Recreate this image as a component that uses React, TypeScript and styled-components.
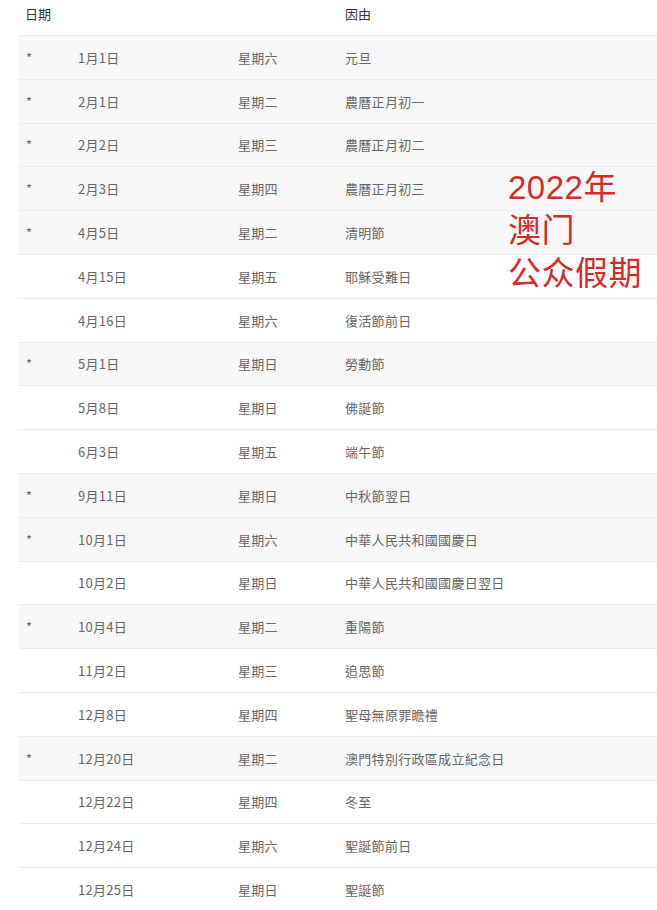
import styled, { createGlobalStyle } from "styled-components";

const GlobalStyle = createGlobalStyle`
  body {
    margin: 0;
    background: #fff;
    font-family: "Noto Sans CJK TC", "Noto Sans CJK SC", sans-serif;
  }
`;

// 2022 澳門公眾假期
const holidays = [
  { star: true, date: "1月1日", day: "星期六", reason: "元旦" },
  { star: true, date: "2月1日", day: "星期二", reason: "農曆正月初一" },
  { star: true, date: "2月2日", day: "星期三", reason: "農曆正月初二" },
  { star: true, date: "2月3日", day: "星期四", reason: "農曆正月初三" },
  { star: true, date: "4月5日", day: "星期二", reason: "清明節" },
  { star: false, date: "4月15日", day: "星期五", reason: "耶穌受難日" },
  { star: false, date: "4月16日", day: "星期六", reason: "復活節前日" },
  { star: true, date: "5月1日", day: "星期日", reason: "勞動節" },
  { star: false, date: "5月8日", day: "星期日", reason: "佛誕節" },
  { star: false, date: "6月3日", day: "星期五", reason: "端午節" },
  { star: true, date: "9月11日", day: "星期日", reason: "中秋節翌日" },
  { star: true, date: "10月1日", day: "星期六", reason: "中華人民共和國國慶日" },
  { star: false, date: "10月2日", day: "星期日", reason: "中華人民共和國國慶日翌日" },
  { star: true, date: "10月4日", day: "星期二", reason: "重陽節" },
  { star: false, date: "11月2日", day: "星期三", reason: "追思節" },
  { star: false, date: "12月8日", day: "星期四", reason: "聖母無原罪瞻禮" },
  { star: true, date: "12月20日", day: "星期二", reason: "澳門特別行政區成立紀念日" },
  { star: false, date: "12月22日", day: "星期四", reason: "冬至" },
  { star: false, date: "12月24日", day: "星期六", reason: "聖誕節前日" },
  { star: false, date: "12月25日", day: "星期日", reason: "聖誕節" },
];

const titleLines = ["2022年", "澳门", "公众假期"];

const App = () => {
  return (
    <>
      <GlobalStyle />
      <Page>
        <Table>
          <HeaderRow>
            <HeadCell>日期</HeadCell>
            <span />
            <span />
            <HeadCell>因由</HeadCell>
          </HeaderRow>
          {holidays.map((h) => (
            <Row key={h.date} shaded={h.star}>
              <Cell>{h.star ? "*" : ""}</Cell>
              <Cell>{h.date}</Cell>
              <Cell>{h.day}</Cell>
              <Cell>{h.reason}</Cell>
            </Row>
          ))}
        </Table>
        <Title>
          {titleLines.map((line) => (
            <TitleLine key={line}>{line}</TitleLine>
          ))}
        </Title>
      </Page>
    </>
  );
};

export default App;

const Page = styled.div`
  position: relative;
  width: 657px;
  height: 910px;
  overflow: hidden;
  padding-left: 18px;
  box-sizing: border-box;
`;

const Table = styled.div`
  display: flex;
  flex-direction: column;
`;

const HeaderRow = styled.div`
  display: grid;
  grid-template-columns: 52px 160px 107px 1fr;
  height: 35px;
  align-items: start;
  padding-top: 4px;
  box-sizing: border-box;
`;

const HeadCell = styled.div`
  font-size: 13px;
  line-height: 20px;
  color: #333;
  white-space: nowrap;
  padding-left: 7px;

  &:last-child {
    padding-left: 8px;
  }
`;

const Row = styled.div<{ shaded: boolean }>`
  display: grid;
  grid-template-columns: 52px 160px 107px 1fr;
  align-items: center;
  height: 43.8px;
  box-sizing: border-box;
  border-top: 1px solid #ececec;
  background: ${(p) => (p.shaded ? "#f8f8f8" : "#fff")};
`;

const Cell = styled.div`
  padding-left: 8px;
  font-size: 13px;
  color: #666;
  white-space: nowrap;
  letter-spacing: 0.3px;
`;

const Title = styled.div`
  position: absolute;
  left: 508px;
  top: 171px;
  display: flex;
  flex-direction: column;
  gap: 10px;
  color: #d42a2a;
  font-family: "Liberation Sans", "Noto Sans CJK SC", sans-serif;
`;

const TitleLine = styled.div`
  font-size: 33px;
  line-height: 33px;
  height: 33px;
  letter-spacing: 0.5px;
  white-space: nowrap;
`;
